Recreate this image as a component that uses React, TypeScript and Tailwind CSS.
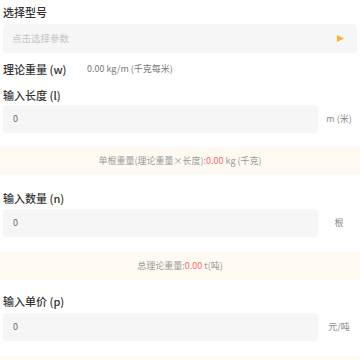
import React from 'react';

const font = { fontFamily: '"Noto Sans CJK SC", "Noto Sans", sans-serif' };

function Label({ text, className = '' }: { text: string; className?: string }) {
  return (
    <div className={`px-[3px] flex items-center text-[11px] font-medium text-[#333] ${className}`}>
      {text}
    </div>
  );
}

function InputRow({ unit }: { unit: string }) {
  return (
    <div className="flex items-center pl-[3px]">
      <div className="w-[315px] h-[28px] rounded-[4px] bg-[#f6f6f6] flex items-center pl-[10px] text-[9px] text-[#666]">
        0
      </div>
      <div className="flex-1 flex justify-center text-[9px] text-[#888]">{unit}</div>
    </div>
  );
}

function Banner({ before, value, after, className = '' }: { before: string; value: string; after: string; className?: string }) {
  return (
    <div className={`h-[28px] bg-[#fffaf1] flex items-center justify-center text-[9px] text-[#999] ${className}`}>
      <span>
        {before}
        <span className="text-[#f56c6c]">{value}</span>
        {after}
      </span>
    </div>
  );
}

export default function App() {
  return (
    <div className="w-[360px] h-[360px] overflow-hidden bg-white" style={font}>
      <Label text="选择型号" className="h-[24px] pt-[1px]" />
      <div className="px-[3px]">
        <div className="h-[29px] rounded-[4px] bg-[#f6f6f6] flex items-center justify-between pl-[9px] pr-[13px]">
          <span className="text-[9.5px] text-[#c4c4c4]">点击选择参数</span>
          <svg width="7" height="7" viewBox="0 0 7 7">
            <path d="M0 0 L7 3.5 L0 7 Z" fill="#f2b33d" />
          </svg>
        </div>
      </div>
      <div className="h-[32px] px-[3px] flex items-center">
        <span className="w-[84px] text-[11px] font-medium text-[#333]">理论重量 (w)</span>
        <span className="text-[9px] text-[#777]">0.00 kg/m (千克每米)</span>
      </div>
      <Label text="输入长度 (l)" className="h-[20px]" />
      <InputRow unit="m (米)" />
      <Banner before="单根重量(理论重量×长度):" value="0.00" after=" kg (千克)" className="mt-[14px]" />
      <Label text="输入数量 (n)" className="h-[22px] mt-[12px]" />
      <InputRow unit="根" />
      <Banner before="总理论重量:" value="0.00" after=" t(吨)" className="mt-[15px]" />
      <Label text="输入单价 (p)" className="h-[23px] mt-[10px]" />
      <InputRow unit="元/吨" />
      <Banner before="" value="" after="" className="mt-[15px]" />
    </div>
  );
}
